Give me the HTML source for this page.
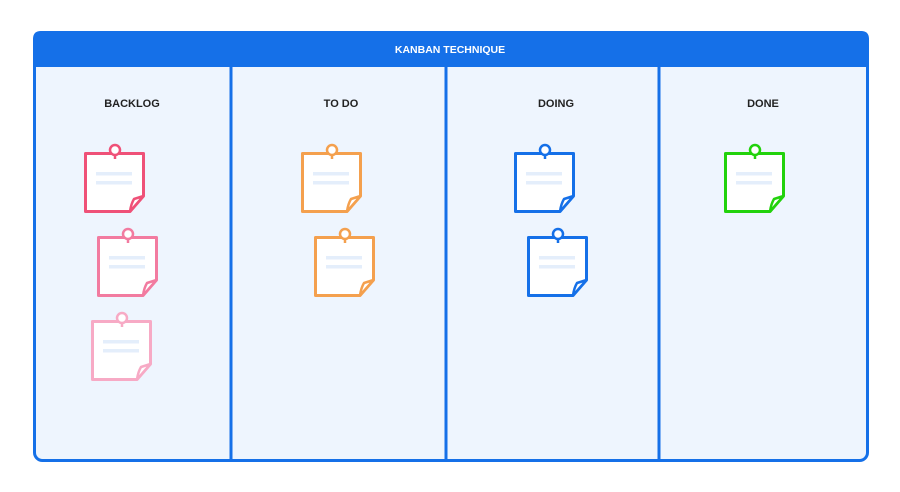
<!DOCTYPE html>
<html><head><meta charset="utf-8"><style>
html,body{margin:0;padding:0;background:#fff;width:900px;height:492px;overflow:hidden}
svg{display:block}
text{font-family:"Liberation Sans",sans-serif;font-weight:bold}
</style></head><body>
<svg width="900" height="492" viewBox="0 0 900 492">
<defs>
<g id="n">
<path d="M1.5,1.5 H59.5 V44 L46,59.5 H1.5 Z" fill="#fff" stroke="currentColor" stroke-width="3" stroke-linejoin="round"/>
<path d="M59.5,44 L50,47 Q47,52 46,59.5 Z" fill="#fff" stroke="currentColor" stroke-width="2.5" stroke-linejoin="round"/>
<path d="M49,56 L54,50" stroke="currentColor" stroke-width="1.5"/>
<rect x="12" y="20" width="36" height="3.5" fill="#e4eefb"/>
<rect x="12" y="29" width="36" height="3.5" fill="#e4eefb"/>
<line x1="31" y1="1" x2="31" y2="7" stroke="currentColor" stroke-width="2.5"/>
<circle cx="31" cy="-2" r="5" fill="#fff" stroke="currentColor" stroke-width="2.5"/>
</g>
</defs>
<rect x="34.5" y="32.5" width="833" height="428" rx="8" fill="#eef5fe" stroke="#1570e8" stroke-width="3"/>
<path d="M33,67 V39 Q33,31 41,31 H861 Q869,31 869,39 V67 Z" fill="#1570e8"/>
<rect x="229.5" y="67" width="3" height="394" fill="#1570e8"/>
<rect x="444.5" y="67" width="3" height="394" fill="#1570e8"/>
<rect x="657.5" y="67" width="3" height="394" fill="#1570e8"/>
<text x="450" y="53" fill="#fff" font-size="10.5" text-anchor="middle">KANBAN TECHNIQUE</text>
<g fill="#222" font-size="11" text-anchor="middle">
<text x="132" y="107">BACKLOG</text>
<text x="341" y="107">TO DO</text>
<text x="556" y="107">DOING</text>
<text x="763" y="107">DONE</text>
</g>
<use href="#n" x="84" y="152" style="color:#ef5178"/>
<use href="#n" x="97" y="236" style="color:#f27ba0"/>
<use href="#n" x="91" y="320" style="color:#f7aac5"/>
<use href="#n" x="301" y="152" style="color:#f4a04e"/>
<use href="#n" x="314" y="236" style="color:#f4a04e"/>
<use href="#n" x="514" y="152" style="color:#1570e8"/>
<use href="#n" x="527" y="236" style="color:#1570e8"/>
<use href="#n" x="724" y="152" style="color:#22d20c"/>
</svg>
</body></html>
